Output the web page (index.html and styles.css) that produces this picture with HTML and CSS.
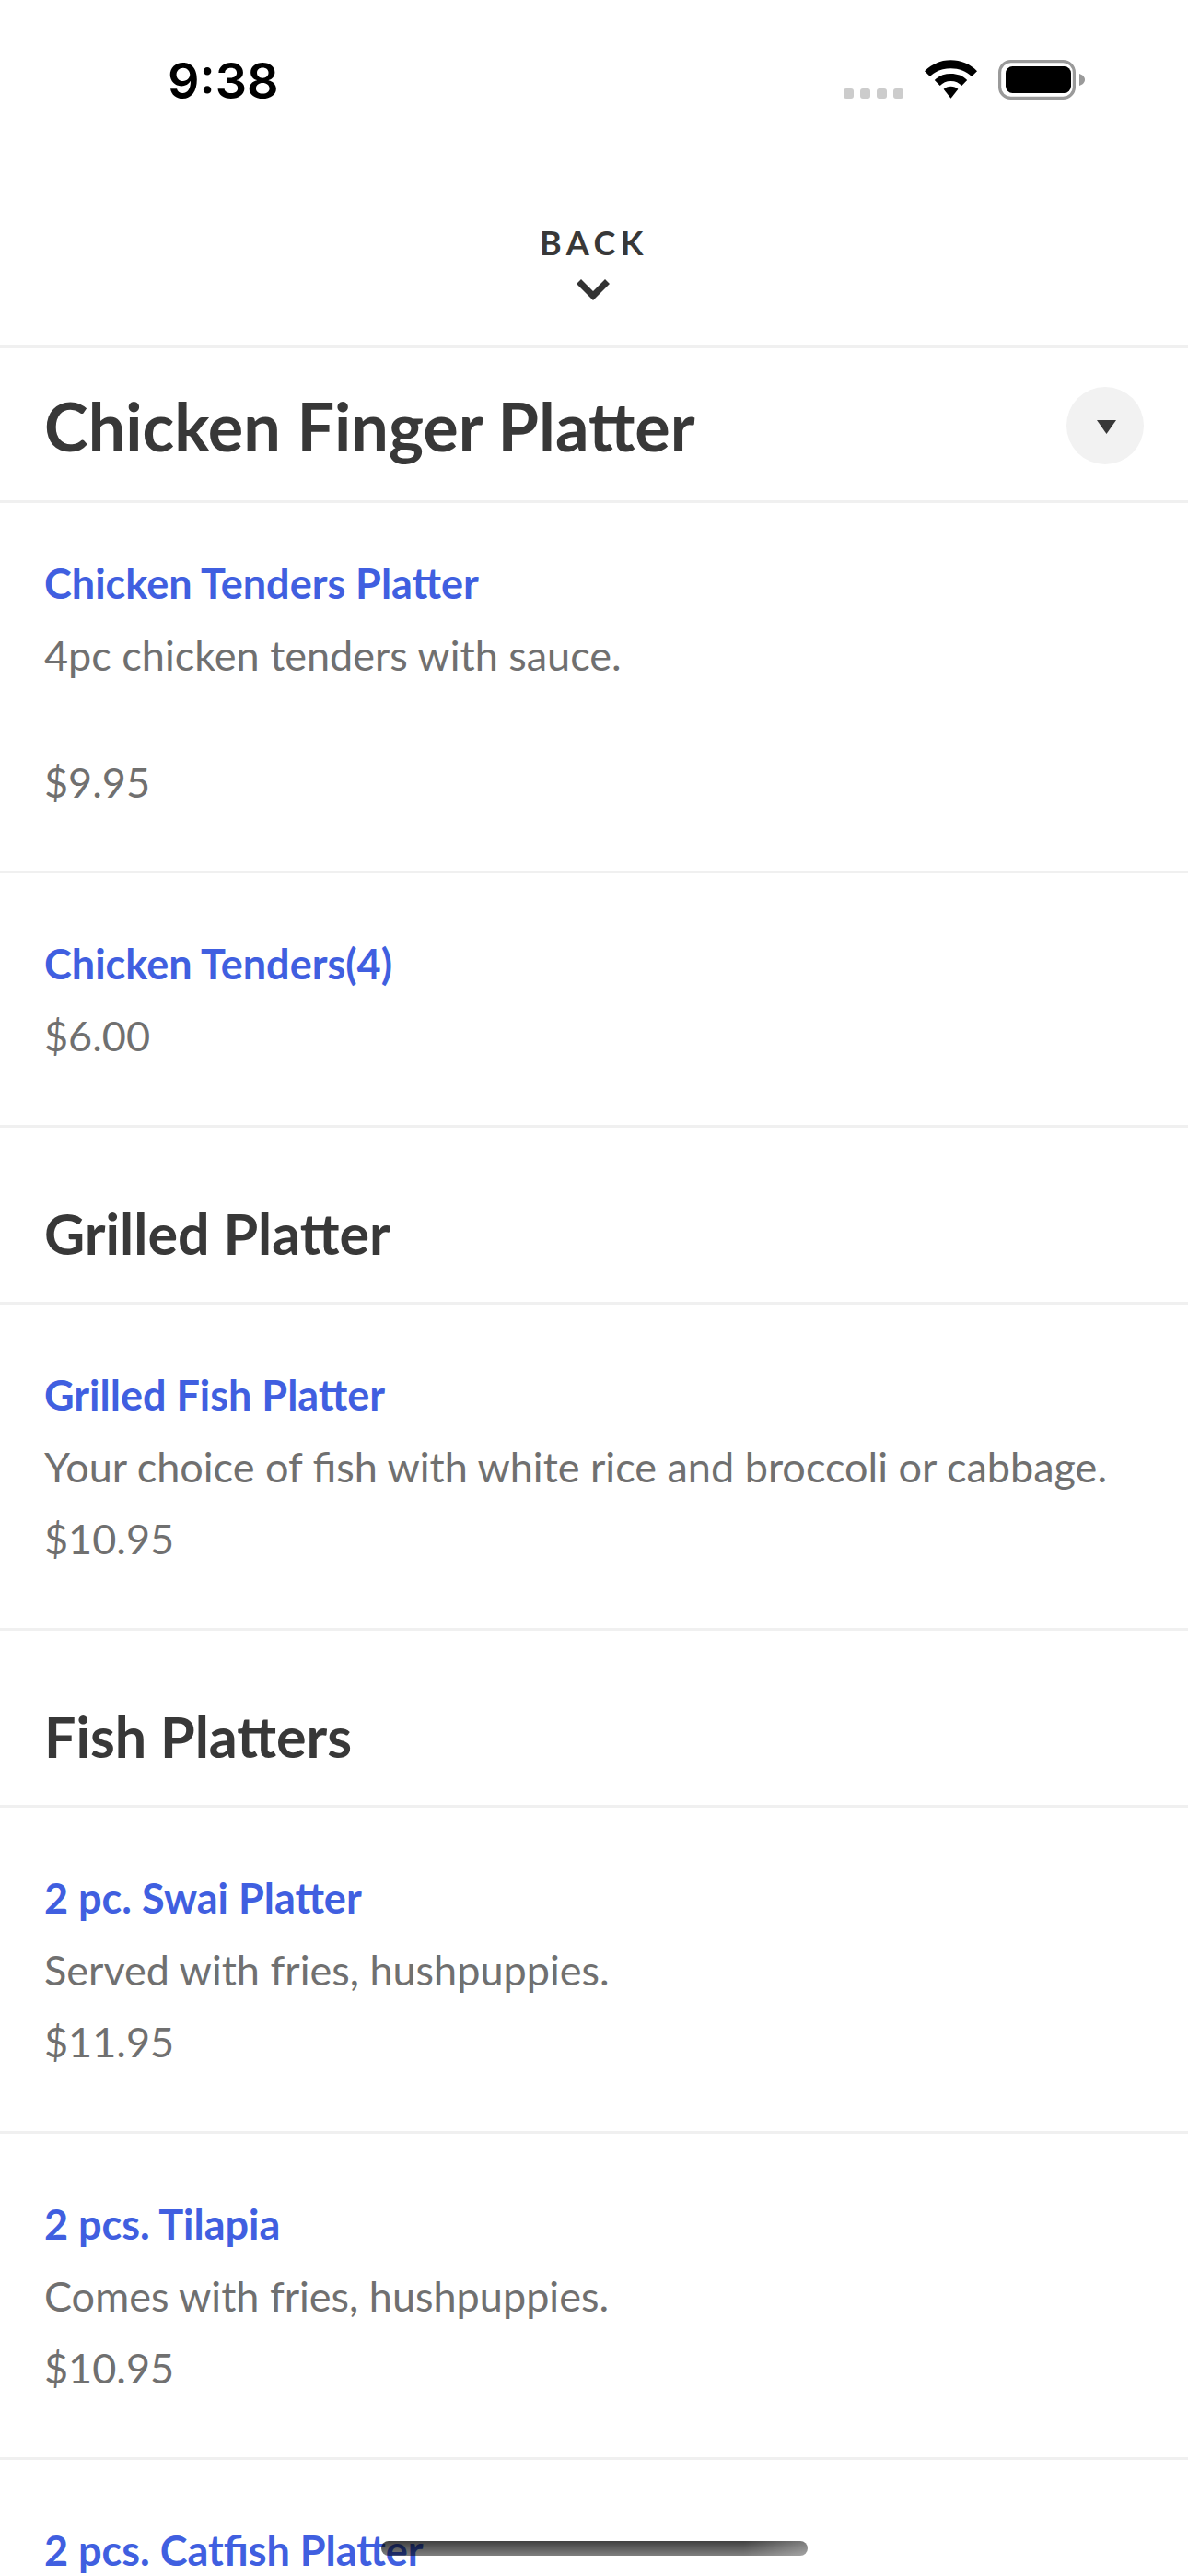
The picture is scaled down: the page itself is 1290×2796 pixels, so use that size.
FILE: index.html
```html
<!DOCTYPE html>
<html lang="en">
<head>
<meta charset="utf-8">
<title>Menu</title>
<link rel="stylesheet" href="styles.css">
</head>
<body>
<div class="screen">
  <header class="status">
    <span class="time">9:38</span>
    <div class="status-icons">
      <div class="signal"><i></i><i></i><i></i><i></i></div>
      <svg class="wifi" width="57" height="42" viewBox="0 0 58 42">
        <path d="M29 0C18 0 8 4 0 12l6 6c6-6 14-9 23-9s17 3 23 9l6-6C50 4 40 0 29 0z"/>
        <path d="M29 15c-7 0-13 2-18 7l6 6c3-3 7-5 12-5s9 2 12 5l6-6c-5-5-11-7-18-7z"/>
        <path d="M29 29c-3 0-6 1-8 3l8 10 8-10c-2-2-5-3-8-3z"/>
      </svg>
      <svg class="battery" width="94" height="43" viewBox="0 0 94 43">
        <rect x="1.6" y="1.6" width="80.8" height="39.8" rx="12" fill="none" stroke="#9a9a9a" stroke-width="3.2"/>
        <rect x="8" y="7" width="71" height="29" rx="7.5" fill="#000"/>
        <path d="M88 15c3 1 6 3 6 6.5s-3 5.5-6 6.5z" fill="#9a9a9a"/>
      </svg>
    </div>
  </header>

  <nav class="back">
    <span class="back-label">BACK</span>
    <svg class="back-chevron" width="36" height="23" viewBox="0 0 36 23">
      <path d="M5 0l13 13L31 0l5 5-18 18L0 5z" fill="#333"/>
    </svg>
  </nav>

  <section class="title-row">
    <h1 class="title">Chicken Finger Platter</h1>
    <button class="collapse" aria-label="Collapse">
      <svg class="collapse-arrow" width="21" height="15" viewBox="0 0 21 15"><path d="M0 0h21L10.5 15z" fill="#383838"/></svg>
    </button>
  </section>

  <article class="item item-spaced">
    <h3 class="name">Chicken Tenders Platter</h3>
    <p class="line desc">4pc chicken tenders with sauce.</p>
    <p class="line">$9.95</p>
  </article>
  <article class="item">
    <h3 class="name">Chicken Tenders(4)</h3>
    <p class="line">$6.00</p>
  </article>

  <h2 class="section">Grilled Platter</h2>
  <article class="item">
    <h3 class="name">Grilled Fish Platter</h3>
    <p class="line">Your choice of fish with white rice and broccoli or cabbage.</p>
    <p class="line">$10.95</p>
  </article>

  <h2 class="section">Fish Platters</h2>
  <article class="item">
    <h3 class="name">2 pc. Swai Platter</h3>
    <p class="line">Served with fries, hushpuppies.</p>
    <p class="line">$11.95</p>
  </article>
  <article class="item">
    <h3 class="name">2 pcs. Tilapia</h3>
    <p class="line">Comes with fries, hushpuppies.</p>
    <p class="line">$10.95</p>
  </article>
  <article class="item">
    <h3 class="name">2 pcs. Catfish Platter</h3>
  </article>

  <div class="home-indicator"></div>
</div>
</body>
</html>
```
FILE: styles.css
```css
* { box-sizing: border-box; }
html, body { margin: 0; padding: 0; background: #fff; }
.screen {
  position: relative;
  width: 1290px;
  height: 2796px;
  overflow: hidden;
  font-family: "Lato", "Liberation Sans", sans-serif;
  background: #fff;
}
.status {
  height: 132px;
  display: flex;
  justify-content: space-between;
  padding: 56px 112px 0 182px;
}
.time {
  font-family: "Inter", "Liberation Sans", sans-serif;
  font-weight: 600;
  font-size: 54px;
  line-height: 64px;
  color: #000;
}
.status-icons { display: flex; align-items: flex-start; gap: 23px; padding-top: 9px; }
.signal { display: flex; gap: 7px; margin-top: 31px; }
.signal i { width: 11px; height: 11px; border-radius: 3px; background: #ccc; display: block; }
.wifi, .battery { display: block; }
.back {
  height: 246px;
  display: flex;
  flex-direction: column;
  align-items: center;
  padding-top: 109px;
  border-bottom: 3px solid #f0f0f0;
}
.back-label {
  font-size: 36px;
  font-weight: 700;
  letter-spacing: 5.5px;
  line-height: 44px;
  color: #383838;
}
.back-chevron { display: block; margin: 18px 3px 0 0; }
.title-row {
  height: 168px;
  display: flex;
  align-items: center;
  justify-content: space-between;
  padding: 4px 48px 0;
  border-bottom: 3px solid #f0f0f0;
}
.title { margin: 0; font-size: 72px; font-weight: 700; color: #383838; line-height: 1.2; }
.collapse {
  width: 84px; height: 84px; border: 0; padding: 0;
  margin-top: -2px;
  border-radius: 50%; background: #f2f2f2;
  display: flex; align-items: center; justify-content: center;
}
.collapse-arrow { display: block; margin: 3px 0 0 3px; }
.item {
  padding: 60px 48px 58px;
  border-bottom: 3px solid #f0f0f0;
}
.item-spaced { padding-top: 49px; padding-bottom: 57px; }
.item-spaced .desc { margin-bottom: 60px; }
.name { margin: 0; font-size: 45px; font-weight: 700; color: #405fe0; line-height: 77px; }
.line { margin: 0; font-size: 45px; font-weight: 400; color: #707070; line-height: 78px; }
.section {
  margin: 0;
  height: 192px;
  padding: 76px 48px 0;
  font-size: 61px;
  font-weight: 700;
  color: #383838;
  line-height: 78px;
  border-bottom: 3px solid #f0f0f0;
}
.home-indicator {
  position: absolute;
  left: 414px;
  top: 2758px;
  width: 463px;
  height: 16px;
  border-radius: 8px;
  background:
    linear-gradient(to right, rgba(255,255,255,0) 85%, rgba(255,255,255,.3)),
    linear-gradient(to bottom, rgba(0,0,0,.75), rgba(0,0,0,.5));
}
```
